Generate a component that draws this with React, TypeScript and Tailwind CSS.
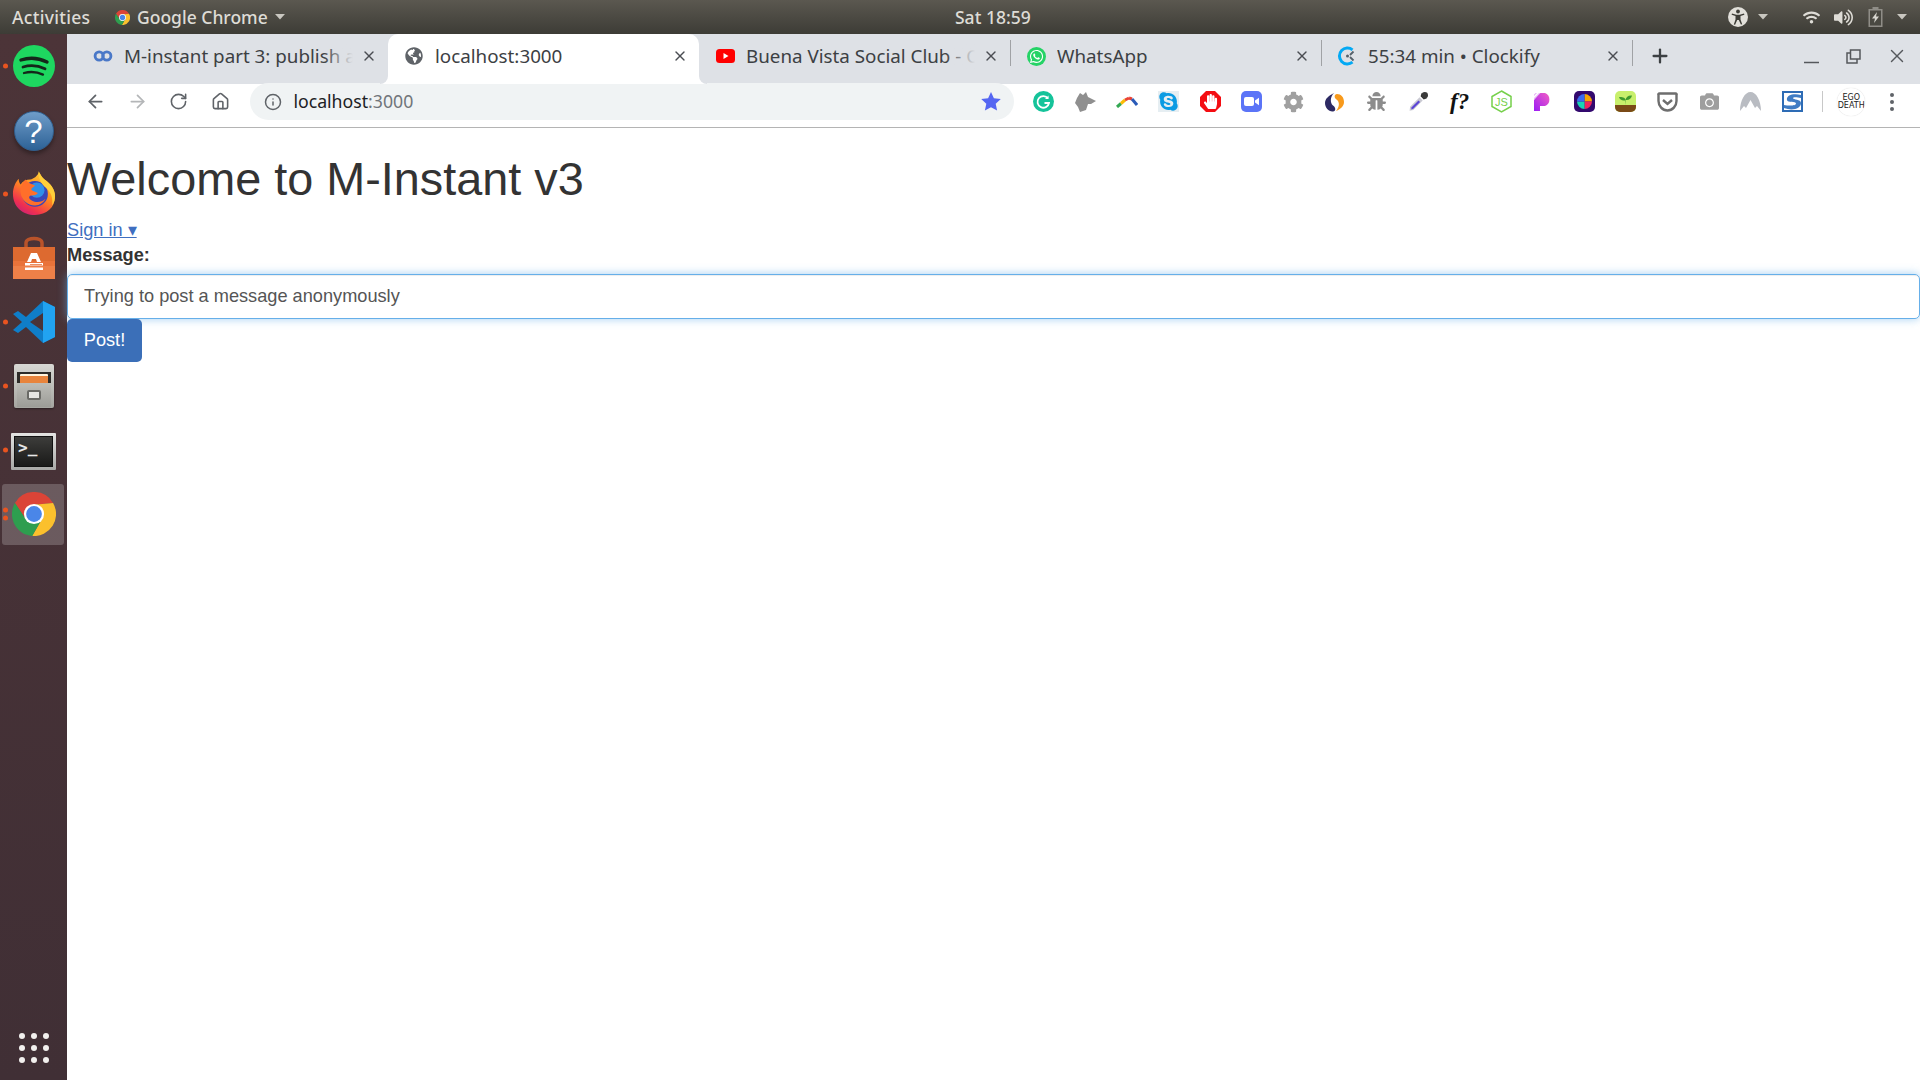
import React from "react";
import { ArrowLeft, ArrowRight, RotateCw, Home, Info, X, Plus } from "lucide-react";
import {
  FaSkype,
  FaHandPaper,
  FaCog,
  FaBug,
  FaCamera,
  FaWhatsapp,
  FaGlobeAmericas,
  FaWifi,
  FaVolumeUp,
} from "react-icons/fa";

const Caret = () => (
  <svg width="10" height="6" viewBox="0 0 10 6">
    <path d="M0 0h10L5 5.5z" fill="#c9c7c0" />
  </svg>
);

const ChromeLogo = ({ size }: { size: number }) => (
  <svg width={size} height={size} viewBox="0 0 48 48">
    <path d="M3.2 12A24 24 0 0 1 44.8 12L24 14 14 28z" fill="#db4437" />
    <path d="M44.8 12A24 24 0 0 1 22 48L33 29 24 14z" fill="#fbc02d" />
    <path d="M22 48A24 24 0 0 1 3.2 12L14 28 33 29z" fill="#2e9e4f" />
    <circle cx="24" cy="24" r="11" fill="#fff" />
    <circle cx="24" cy="24" r="8.6" fill="#4a86e8" />
  </svg>
);

// ---- dock ----
const Spotify = () => (
  <svg width="42" height="42" viewBox="0 0 42 42">
    <circle cx="21" cy="21" r="21" fill="#1ed760" />
    <g fill="none" stroke="#14261a" strokeLinecap="round">
      <path d="M8 15c9-3 18-2 26 2" strokeWidth="3.4" />
      <path d="M10 22c8-2.400 15-1.600 22 1.800" strokeWidth="2.8" />
      <path d="M11 28c7-1.800 13-1.200 19 1.600" strokeWidth="2.300" />
    </g>
  </svg>
);

const Help = () => (
  <div className="mt-[2px] flex h-[40px] w-[40px] items-center justify-center rounded-full border border-[#2f5f8f] bg-gradient-to-b from-[#6f9dc9] to-[#2d6296] font-['Liberation_Sans',sans-serif] text-[33px] leading-none text-white shadow-[0_3px_4px_rgba(0,0,0,0.35)]">
    ?
  </div>
);

const Firefox = () => (
  <svg className="-mt-[2px]" width="44" height="44" viewBox="0 0 44 46">
    <defs>
      <linearGradient id="ff" x1="0.8" y1="0" x2="0.2" y2="1">
        <stop offset="0" stopColor="#ffd43b" />
        <stop offset="0.45" stopColor="#ff8a1f" />
        <stop offset="0.8" stopColor="#f0304f" />
        <stop offset="1" stopColor="#c61f7c" />
      </linearGradient>
    </defs>
    <path d="M27 1c3 3 3 6 6 8 7 5 11 11 11 18 0 11-9 19-21 19C10 46 0 37 0 24 0 17 3 11 6 8c0 3 1 5 2 6 2-3 6-5 10-5 4-1 8-4 9-8z" fill="url(#ff)" />
    <circle cx="23" cy="24" r="13.500" fill="#3a46b8" />
    <circle cx="25" cy="20" r="8" fill="#2f8fe8" />
    <path d="M13 9c-2 3-6 6-5 14 1 7 7 13 15 13 5 0 9-3 11-7-4 4-10 4-14 2-3-1-4-4-2-5 3-1 6 0 8-3-3-2-6-2-7-4 1-2 3-2 4-4-3-1-7-2-10-6z" fill="#ff6f2a" />
    <path d="M27 0c1 4 3 6 6 9 6 4 11 10 11 17 0 4-1 7-3 10 1-8-1-13-6-18-6-5-9-11-8-18z" fill="#ffcf3a" />
  </svg>
);

const Software = () => (
  <svg width="42" height="44" viewBox="0 0 42 44">
    <path d="M13 12V7c0-6 16-6 16 0v5" fill="none" stroke="#b9532a" strokeWidth="3.500" />
    <path d="M0 11h42v32H0z" fill="#e9733a" />
    <path d="M0 11h42v14H0z" fill="#dd6a30" />
    <path d="M0 30h42v13H0z" fill="#ee8048" />
    <path d="M18 17h6l4 9h-4l-1-3h-4l-1 3h-4z" fill="#fff" />
    <path d="M12 27h18v2.500H12zM12 31.500h18v2.500H12z" fill="#fff" />
    <path d="M17 28h12v.8H17z" fill="#e9733a" />
  </svg>
);

const VsCode = () => (
  <svg width="42" height="42" viewBox="0 0 42 42">
    <path d="M30 0l12 6v30l-12 6-17-16-8 6-5-3 9-8-9-8 5-3 8 6z" fill="#0f7ec9" />
    <path d="M30 0l12 6v30l-12 6z" fill="#21a3f1" />
    <path d="M30 12L17 21l13 9z" fill="#4a3338" />
  </svg>
);

const Files = () => (
  <div className="flex h-[44px] w-[40px] flex-col rounded-[2px] bg-gradient-to-b from-[#d8d8d4] to-[#a5a5a0] px-[3px] pt-[8px] pb-[1px] shadow-[0_1px_2px_rgba(0,0,0,0.4)]">
    <div className="h-[11px] bg-[#2d2b28] px-[3px] pt-[2px]">
      <div className="h-[9px] rounded-t-[1px] border-t-2 border-[#fff3dc] bg-[#e8843c]" />
    </div>
    <div className="flex flex-1 items-center justify-center bg-gradient-to-b from-[#bdbdb8] to-[#9c9c97]">
      <div className="h-[10px] w-[14px] rounded-[2px] border-2 border-[#6a6a66] bg-[#e6e6e3]" />
    </div>
  </div>
);

const Terminal = () => (
  <div className="mt-[3px] h-[37px] w-[45px] rounded-[1px] bg-gradient-to-b from-[#e4e4e2] to-[#a8a8a6] p-[3px]">
    <div className="flex h-full items-start border border-[#111] bg-gradient-to-b from-[#3d3d3b] to-[#1a1a19] px-[3px] font-['DejaVu_Sans_Mono',monospace] text-[16px] leading-[22px] font-bold text-[#e8e8e8]">
      &gt;_
    </div>
  </div>
);

const dockItems: { icon: React.ReactNode; dots: number; active?: boolean }[] = [
  { icon: <Spotify />, dots: 1 },
  { icon: <Help />, dots: 0 },
  { icon: <Firefox />, dots: 1 },
  { icon: <Software />, dots: 0 },
  { icon: <VsCode />, dots: 1 },
  { icon: <Files />, dots: 1 },
  { icon: <Terminal />, dots: 1 },
  { icon: <ChromeLogo size={44} />, dots: 2, active: true },
];

const Dock = () => (
  <aside className="flex h-full w-[67px] shrink-0 flex-col bg-gradient-to-b from-[#4c3438] to-[#402f35]">
    {dockItems.map((item, i) => (
      <div key={i} className="relative flex h-[64px] items-center justify-center">
        {item.active && <div className="absolute top-[2px] left-[2px] h-[61px] w-[62px] rounded-[3px] bg-white/20" />}
        <div className="relative">{item.icon}</div>
        {item.dots > 0 && (
          <div className="absolute top-1/2 left-[3px] flex -translate-y-1/2 flex-col gap-[3px]">
            {item.dots === 2 && <span className="h-[5px] w-[5px] rounded-full bg-[#e95420]" />}
            <span className="h-[5px] w-[5px] rounded-full bg-[#e95420]" />
          </div>
        )}
      </div>
    ))}
    <div className="mt-auto mb-[17px] grid grid-cols-3 justify-center gap-x-[6px] gap-y-[6px] self-center">
      {Array.from({ length: 9 }).map((_, i) => (
        <span key={i} className="h-[6px] w-[6px] rounded-full bg-[#f2f0ee]" />
      ))}
    </div>
  </aside>
);

// ---- top bar ----
const TopBar = () => (
  <header className="flex h-[34px] shrink-0 items-center bg-gradient-to-b from-[#5b5850] to-[#3d3c36] pr-[13px] pl-[12px] font-['Noto_Sans',sans-serif] text-[17.500px] font-medium whitespace-nowrap text-[#dedcd6]">
    <div className="flex w-[943px] items-center">
      <span className="w-[103px] tracking-[0.3px]">Activities</span>
      <ChromeLogo size={15} />
      <span className="ml-[7px]">Google Chrome</span>
      <span className="ml-[7px]">
        <Caret />
      </span>
    </div>
    <div>Sat 18:59</div>
    <div className="ml-auto flex items-center text-[#dedcd6]">
      <svg width="20" height="20" viewBox="0 0 20 20">
        <circle cx="10" cy="10" r="10" fill="#e2e0da" />
        <circle cx="10" cy="4.500" r="1.900" fill="#3d3c36" />
        <path d="M4 6.500l4.300 1.200h3.400L16 6.500l.4 1.300-3.900 1.300v3.300l1.700 4.800-1.300.4L10.800 13h-1.600l-2.100 4.800-1.300-.4 1.700-4.800V9.100L3.600 7.800z" fill="#3d3c36" />
      </svg>
      <span className="mr-[35px] ml-[10px]">
        <Caret />
      </span>
      <FaWifi size={17} />
      <span className="ml-[14px]">
        <FaVolumeUp size={19} />
      </span>
      <svg className="ml-[15px]" width="15" height="20" viewBox="0 0 15 20">
        <path d="M4.500 0h6v2h4v18H.5V2h4z" fill="#8f8d87" />
        <path d="M2 3.500h11v15H2z" fill="#4a4942" />
        <path d="M9 5L4 11.500h3L6 16l5-6.500H8z" fill="#d8d6d0" />
      </svg>
      <span className="ml-[14px]">
        <Caret />
      </span>
    </div>
  </header>
);

// ---- tabs ----
const TabClose = () => <X size={16} strokeWidth={2} className="shrink-0 text-[#4a4d52]" />;

const Tab = ({
  favicon,
  title,
  active,
  fade,
  divider,
}: {
  favicon: React.ReactNode;
  title: string;
  active?: boolean;
  fade?: boolean;
  divider?: boolean;
}) => (
  <div
    className={`relative flex h-[50px] w-[311px] shrink-0 items-center pr-[11px] pb-[6px] pl-[16px] ${
      active ? "rounded-t-[10px] bg-white" : ""
    }`}
  >
    {active && (
      <>
        <div className="absolute bottom-0 -left-[8px] h-[8px] w-[8px] bg-white">
          <div className="h-full w-full rounded-br-[8px] bg-[#dee1e6]" />
        </div>
        <div className="absolute -right-[8px] bottom-0 h-[8px] w-[8px] bg-white">
          <div className="h-full w-full rounded-bl-[8px] bg-[#dee1e6]" />
        </div>
      </>
    )}
    <div className="flex w-[20px] shrink-0 items-center justify-center">{favicon}</div>
    <div className="relative mr-[8px] ml-[11px] min-w-0 flex-1 overflow-hidden text-[18.800px] whitespace-nowrap text-[#3c4043]">
      {title}
      {fade && <div className="absolute top-0 right-0 h-full w-[30px] bg-gradient-to-r from-[#dee1e6]/0 to-[#dee1e6]" />}
    </div>
    <TabClose />
    {divider && <div className="absolute top-[6px] -right-[1px] h-[26px] w-[1.500px] bg-[#a0a2a5]" />}
  </div>
);

const TabStrip = () => (
  <div className="flex h-[50px] shrink-0 items-center bg-[#dee1e6] pl-[10px] font-['Noto_Sans',sans-serif]">
    <Tab
      title="M-instant part 3: publish a"
      fade
      favicon={
        <svg width="21" height="12" viewBox="0 0 21 12">
          <g fill="none" stroke="#4a78c8" strokeWidth="3">
            <circle cx="6.500" cy="6" r="4.300" />
            <circle cx="14.500" cy="6" r="4.300" />
          </g>
        </svg>
      }
    />
    <Tab active title="localhost:3000" favicon={<FaGlobeAmericas size={18} color="#5f6368" />} />
    <Tab
      title="Buena Vista Social Club - C"
      fade
      divider
      favicon={
        <svg width="19" height="14" viewBox="0 0 19 14">
          <rect width="19" height="14" rx="3.500" fill="#f00" />
          <path d="M7.500 4l5 3-5 3z" fill="#fff" />
        </svg>
      }
    />
    <Tab
      title="WhatsApp"
      divider
      favicon={
        <div className="flex h-[19px] w-[19px] items-center justify-center rounded-full bg-[#25d366]">
          <FaWhatsapp size={15} color="#fff" />
        </div>
      }
    />
    <Tab
      title="55:34 min • Clockify"
      divider
      favicon={
        <svg width="20" height="20" viewBox="0 0 20 20">
          <path d="M15.500 3.800A8 8 0 1 0 15.500 16.200" fill="none" stroke="#03a9f4" strokeWidth="3" />
          <path d="M16.500 5.500L13 9M13 11l3.500 3.500" fill="none" stroke="#55606a" strokeWidth="1.800" />
          <circle cx="10.500" cy="10" r="1.500" fill="#55606a" />
        </svg>
      }
    />
    <div className="ml-[17px] pb-[6px] text-[#3c4043]">
      <Plus size={22} strokeWidth={2.500} />
    </div>
    <div className="ml-auto flex items-center pb-[6px] text-[#3c4043]">
      <svg width="15" height="15" viewBox="0 0 15 15">
        <path d="M0 13.500h15" stroke="#55585c" strokeWidth="1.500" />
      </svg>
      <svg className="ml-[27px]" width="15" height="15" viewBox="0 0 15 15" fill="none" stroke="#55585c" strokeWidth="1.500">
        <path d="M4.500 1h9.500v9h-9.500z" />
        <path d="M4.500 4H1v10h10v-4" />
      </svg>
      <X className="mr-[12px] ml-[25px]" size={22} strokeWidth={1.500} color="#55585c" />
    </div>
  </div>
);

// ---- toolbar extensions ----
const Ext = ({ children }: { children: React.ReactNode }) => (
  <div className="flex h-[35px] w-[41.600px] shrink-0 items-center justify-center">{children}</div>
);

const extensions: React.ReactNode[] = [
  <svg key="grammarly" width="21" height="21" viewBox="0 0 21 21">
    <circle cx="10.500" cy="10.500" r="10.500" fill="#15c39a" />
    <path d="M15 7.500A5.800 5.800 0 1 0 16 12h-4.500" fill="none" stroke="#fff" strokeWidth="1.800" />
    <path d="M15.500 4.500v3.500H12z" fill="#fff" />
  </svg>,
  <svg key="wolf" width="21" height="20" viewBox="0 0 21 20">
    <path d="M5 1l3 2 3-3 2 5 8 4-5 3-3 0-2 6-6 2-2-5-3-4 2-5z" fill="#8f8f8f" />
  </svg>,
  <svg key="boomerang" width="22" height="12" viewBox="0 0 22 12" fill="none" strokeWidth="3">
    <path d="M1 11l4-3.500" stroke="#34a853" />
    <path d="M5 7.500L9 4" stroke="#fbbc05" />
    <path d="M9 4l4-2" stroke="#ea4335" />
    <path d="M13 2l3 1" stroke="#ea4335" />
    <path d="M16 3l5 6" stroke="#2a5bb8" />
  </svg>,
  <div key="skype" className="flex h-[21px] w-[21px] items-center justify-center bg-[#e6eef2]">
    <FaSkype size={21} color="#0b9be3" />
  </div>,
  <div key="adblock" className="relative flex h-[21px] w-[21px] items-center justify-center">
    <svg className="absolute inset-0" width="21" height="21" viewBox="0 0 21 21">
      <path d="M6 0h9l6 6v9l-6 6H6l-6-6V6z" fill="#f40d12" />
    </svg>
    <FaHandPaper className="relative" size={15} color="#fff" />
  </div>,
  <div key="zoom" className="flex h-[21px] w-[21px] items-center justify-center rounded-[5px] bg-[#5b74f7]">
    <svg width="15" height="9" viewBox="0 0 15 9">
      <rect width="10" height="9" rx="2" fill="#fff" />
      <path d="M11 3.500L15 .8v7.400L11 5.500z" fill="#fff" />
    </svg>
  </div>,
  <div key="gear" className="flex h-[21px] w-[21px] items-center justify-center">
    <FaCog size={22} color="#a0a0a0" />
  </div>,
  <svg key="simplenote" width="19" height="20" viewBox="0 0 19 20">
    <path d="M9 1C3 4 0 7 0 11c0 5 4 9 8 8.500 3-.5 3-4 0-6C5 11 5 5 9 1z" fill="#2d2a63" />
    <path d="M11 19c5-2 8-5 8-9 0-5-3-8-7-8-3 .5-3 4-.5 5.500 3.500 2.500 3 7.500-.5 11.500z" fill="#f89a1c" />
  </svg>,
  <div key="bug" className="flex h-[21px] w-[21px] items-center justify-center">
    <FaBug size={19} color="#8c8c8c" />
  </div>,
  <svg key="dropper" width="21" height="21" viewBox="0 0 20 20">
    <path d="M13 2l5 5-3 1-3-3z" fill="#333" />
    <circle cx="16" cy="4" r="3" fill="#3a3a3a" />
    <path d="M11 6l3 3-9 9-3.500.8L2 15z" fill="#c9c9d2" />
    <path d="M10 9l1.500 1.500-6.500 6.500-2 .5.500-2z" fill="#5b45d6" />
  </svg>,
  <span key="fq" className="font-['Liberation_Serif',serif] text-[23px] leading-none font-bold text-[#111] italic">
    f?
  </span>,
  <svg key="node" width="21" height="23" viewBox="0 0 21 23">
    <path d="M10.500 1L20 6.500v10L10.500 22 1 16.500v-10z" fill="none" stroke="#76d04b" strokeWidth="1.500" />
    <text x="10.500" y="15.500" textAnchor="middle" fontSize="11" fontFamily="Liberation Sans, sans-serif" fill="#76d04b">
      JS
    </text>
  </svg>,
  <svg key="patreon" width="18" height="18" viewBox="0 0 18 18">
    <defs>
      <linearGradient id="pat" x1="1" y1="0" x2="0" y2="1">
        <stop offset="0" stopColor="#f25fc4" />
        <stop offset="1" stopColor="#9b1bf5" />
      </linearGradient>
    </defs>
    <path d="M0 18V7l6-7h5a7 7 0 0 1 0 13H6v5z" fill="url(#pat)" />
    <path d="M0 5l5-5h1.500L0 6.500zM0 1.500L1.500 0h1.500L0 3z" fill="#e6b4f5" />
  </svg>,
  <div key="palette" className="flex h-[21px] w-[21px] items-center justify-center rounded-[5px] bg-[#33096e]">
    <svg width="15" height="15" viewBox="0 0 15 15">
      <path d="M7.500 7.500V0A7.500 7.500 0 0 1 15 7.500z" fill="#f7a600" />
      <path d="M7.500 7.500H15A7.500 7.500 0 0 1 7.500 15z" fill="#f0245c" />
      <path d="M7.500 7.500V15A7.500 7.500 0 0 1 0 7.500z" fill="#17d4b4" />
      <path d="M7.500 7.500H0A7.500 7.500 0 0 1 7.500 0z" fill="#3a6cf0" />
    </svg>
  </div>,
  <div key="forest" className="relative flex h-[21px] w-[21px] flex-col overflow-hidden rounded-[5px] bg-[#c8ef6c]">
    <svg className="mt-[4px] ml-[4px]" width="13" height="10" viewBox="0 0 13 10">
      <path d="M6.500 10V5C6 2 3 2 0 2c.5 2.500 3 4 6 3.500M6.500 5c.5-3 3-5 6.500-4.500C12.500 3.500 10 5.500 6.500 5z" fill="#3e9a2d" />
    </svg>
    <div className="mt-auto h-[7px] bg-[#7a4a17]" />
  </div>,
  <svg key="pocket" width="21" height="20" viewBox="0 0 21 20">
    <path d="M1.500 3a1 1 0 0 1 1-1.500h16a1 1 0 0 1 1 1.500v6c0 5-4 9.500-9 9.500s-9-4.500-9-9.500z" fill="none" stroke="#6e6e6e" strokeWidth="2.400" />
    <path d="M6 8l4.500 4L15 8" fill="none" stroke="#6e6e6e" strokeWidth="2.400" />
  </svg>,
  <div key="camera" className="flex h-[21px] w-[21px] items-center justify-center">
    <FaCamera size={19} color="#9e9e9e" />
  </div>,
  <svg key="nord" width="21" height="19" viewBox="0 0 21 19">
    <path d="M0 19C0 8 5 0 10.500 0S21 8 21 19l-4-5-2 2-4.500-8-4.500 8-2-2z" fill="#b9bcc2" />
  </svg>,
  <div key="sbox" className="h-[21px] w-[21px] overflow-hidden border-2 border-[#2e6cb5] bg-white">
    <svg width="17" height="17" viewBox="0 0 17 17">
      <path d="M17 2C8 0 2 3 3 7c.5 3 9 1 9 3.500C12 13 5 13 0 12v3c8 3 17 1 17-5 0-4-8-3-8-5 0-1 4-1 8 0z" fill="#3f7cc4" />
    </svg>
  </div>,
];

const Toolbar = () => (
  <div className="flex h-[43.500px] shrink-0 items-center border-b border-b-[#b4b4b4] bg-white pb-[7px] pl-[8px] font-['Noto_Sans',sans-serif]">
    <Ext>
      <ArrowLeft size={21} color="#5f6368" strokeWidth={2} />
    </Ext>
    <Ext>
      <ArrowRight size={21} color="#b4b6b8" strokeWidth={2} />
    </Ext>
    <Ext>
      <RotateCw size={19} color="#5f6368" strokeWidth={2} />
    </Ext>
    <Ext>
      <Home size={19} color="#5f6368" strokeWidth={2} />
    </Ext>
    <div className="ml-[9px] flex h-[37px] w-[764px] shrink-0 items-center rounded-full bg-[#f0f3f4] pr-[13px] pl-[14px]">
      <Info size={18} color="#5f6368" strokeWidth={2} />
      <div className="ml-[11px] text-[17.700px] text-[#202124]">
        localhost<span className="text-[#70757a]">:3000</span>
      </div>
      <svg className="ml-auto" width="20" height="19" viewBox="0 0 20 19">
        <path d="M10 0l2.900 6.300 6.900.8-5.100 4.700 1.400 6.800L10 15.200l-6.100 3.400 1.400-6.800L.2 7.100l6.900-.8z" fill="#5566f2" />
      </svg>
    </div>
    <div className="ml-[8.500px] flex items-center">
      {extensions.map((ext, i) => (
        <Ext key={i}>{ext}</Ext>
      ))}
    </div>
    <div className="ml-[9px] h-[21px] w-px bg-[#c8c8c8]" />
    <div className="ml-[14px] flex h-[28px] w-[28px] items-center justify-center overflow-hidden rounded-full bg-white font-['DejaVu_Sans',sans-serif] text-[8px] leading-[8px] text-[#222] shadow-[0_0_1px_rgba(0,0,0,0.2)]">
      <div className="text-center">
        EGO
        <br />
        DEATH
      </div>
    </div>
    <div className="ml-[25px] flex flex-col gap-[3px]">
      <span className="h-[4px] w-[4px] rounded-full bg-[#5f6368]" />
      <span className="h-[4px] w-[4px] rounded-full bg-[#5f6368]" />
      <span className="h-[4px] w-[4px] rounded-full bg-[#5f6368]" />
    </div>
  </div>
);

// ---- page ----
const Page = () => (
  <main className="min-h-0 flex-1 bg-white font-['Liberation_Sans',sans-serif] text-[18.200px] leading-[25px] text-[#333]">
    <h1 className="mt-[26px] mb-[13px] text-[46.800px] leading-[51.500px] font-normal">Welcome to M-Instant v3</h1>
    <a href="#" className="block w-fit text-[#3f6fc0] underline">
      Sign in ▾
    </a>
    <label className="block font-bold">Message:</label>
    <input
      readOnly
      value="Trying to post a message anonymously"
      className="mt-[6px] block h-[45px] w-full rounded-[5px] border border-[#66afe9] px-[16px] text-[#555] shadow-[inset_0_1px_1px_rgba(0,0,0,0.075),0_0_10px_rgba(102,175,233,0.6)] outline-none"
    />
    <button className="h-[43px] w-[75px] rounded-[5px] bg-[#3b6fb8] text-white">Post!</button>
  </main>
);

export default function App() {
  return (
    <div className="relative flex h-[1080px] w-[1920px] flex-col overflow-hidden">
      <TopBar />
      <div className="flex min-h-0 flex-1">
        <Dock />
        <div className="flex min-w-0 flex-1 flex-col">
          <TabStrip />
          <Toolbar />
          <Page />
        </div>
      </div>
    </div>
  );
}
